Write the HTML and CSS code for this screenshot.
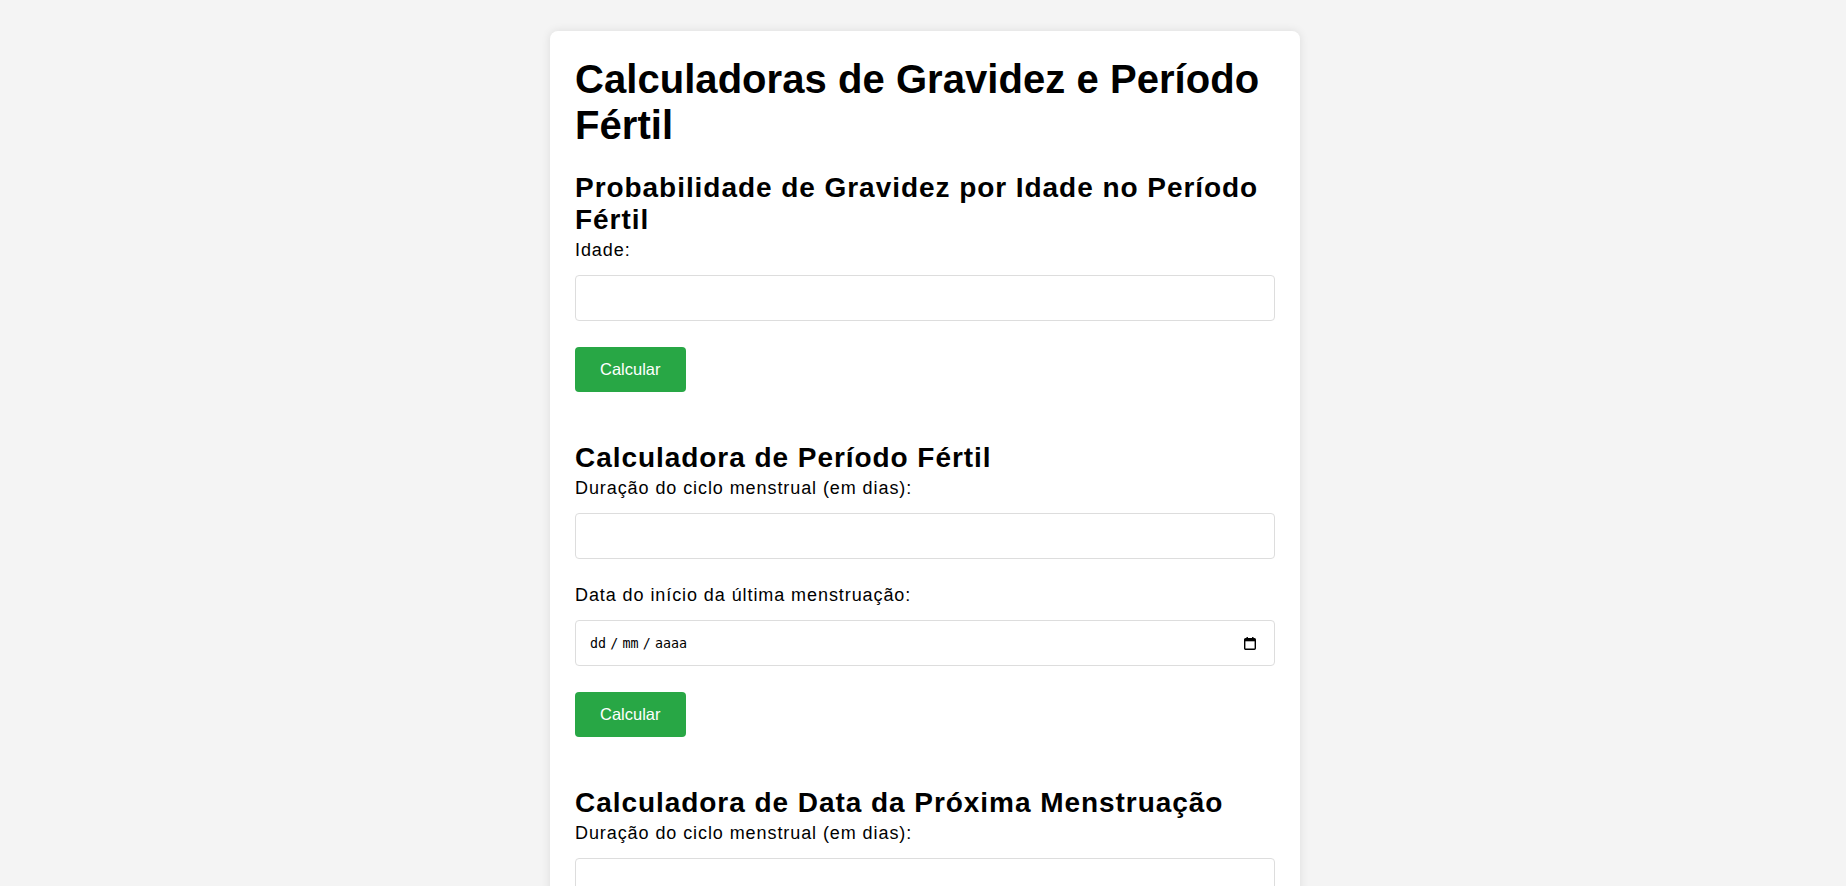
FILE: index.html
```html
<!DOCTYPE html>
<html lang="pt-BR">
<head>
<meta charset="utf-8">
<title>Calculadoras de Gravidez e Período Fértil</title>
<link rel="stylesheet" href="styles.css">
</head>
<body>
<div class="container">
  <h1 class="title">Calculadoras de Gravidez e Período Fértil</h1>

  <section class="calc">
    <h2 class="calc-title">Probabilidade de Gravidez por Idade no Período Fértil</h2>
    <label class="field-label" for="idade">Idade:</label>
    <input class="field" id="idade" type="text">
    <button class="btn" type="button">Calcular</button>
  </section>

  <section class="calc">
    <h2 class="calc-title">Calculadora de Período Fértil</h2>
    <label class="field-label" for="ciclo1">Duração do ciclo menstrual (em dias):</label>
    <input class="field" id="ciclo1" type="text">
    <label class="field-label">Data do início da última menstruação:</label>
    <div class="field date-field">
      <span class="date-text"><span class="seg">dd</span><span class="sep">/</span><span class="seg">mm</span><span class="sep">/</span><span class="seg">aaaa</span></span>
      <svg class="cal-icon" width="12" height="13" viewBox="0 0 12 13" aria-hidden="true">
        <rect x="2.5" y="0" width="1.4" height="2.5" fill="#000"/>
        <rect x="8.1" y="0" width="1.4" height="2.5" fill="#000"/>
        <rect x="0.7" y="1.7" width="10.6" height="10.6" rx="1" fill="none" stroke="#000" stroke-width="1.4"/>
        <rect x="0.7" y="1.7" width="10.6" height="2.6" fill="#000"/>
      </svg>
    </div>
    <button class="btn" type="button">Calcular</button>
  </section>

  <section class="calc">
    <h2 class="calc-title">Calculadora de Data da Próxima Menstruação</h2>
    <label class="field-label" for="ciclo2">Duração do ciclo menstrual (em dias):</label>
    <input class="field" id="ciclo2" type="text">
    <label class="field-label">Data do início da última menstruação:</label>
    <div class="field date-field">
      <span class="date-text"><span class="seg">dd</span><span class="sep">/</span><span class="seg">mm</span><span class="sep">/</span><span class="seg">aaaa</span></span>
      <svg class="cal-icon" width="12" height="13" viewBox="0 0 12 13" aria-hidden="true">
        <rect x="2.5" y="0" width="1.4" height="2.5" fill="#000"/>
        <rect x="8.1" y="0" width="1.4" height="2.5" fill="#000"/>
        <rect x="0.7" y="1.7" width="10.6" height="10.6" rx="1" fill="none" stroke="#000" stroke-width="1.4"/>
        <rect x="0.7" y="1.7" width="10.6" height="2.6" fill="#000"/>
      </svg>
    </div>
    <button class="btn" type="button">Calcular</button>
  </section>
</div>
</body>
</html>
```
FILE: styles.css
```css
html, body {
  margin: 0;
  padding: 0;
}

body {
  background: #f4f4f4;
  font-family: "Liberation Sans", Arial, sans-serif;
  color: #000;
  padding-left: 4px;
}

.container {
  box-sizing: border-box;
  width: 750px;
  margin: 31px auto 30px;
  padding: 25px;
  background: #fff;
  border-radius: 8px;
  box-shadow: 0 0 10px rgba(0, 0, 0, 0.1);
}

.title {
  margin: 0 0 24px;
  font-size: 40px;
  line-height: 46px;
  font-weight: bold;
  letter-spacing: 0.05px;
}

.calc {
  display: flex;
  flex-direction: column;
  align-items: flex-start;
  margin-bottom: 50px;
}

.calc-title {
  margin: 0 0 4px;
  font-size: 28px;
  line-height: 32px;
  font-weight: bold;
  letter-spacing: 0.95px;
}

.field-label {
  display: block;
  font-size: 18px;
  line-height: 21px;
  margin-bottom: 14px;
  letter-spacing: 0.92px;
}

.field {
  box-sizing: border-box;
  width: 100%;
  height: 46px;
  margin: 0 0 26px;
  padding: 0 12px;
  border: 1px solid #ddd;
  border-radius: 4px;
  background: #fff;
  font-family: "Liberation Sans", Arial, sans-serif;
  font-size: 16px;
}

.date-field {
  display: flex;
  align-items: center;
  justify-content: space-between;
  padding: 0 18px 0 13px;
}

.date-text {
  font-family: "DejaVu Sans Mono", "Liberation Mono", monospace;
  font-size: 13.33px;
  color: #000;
  display: flex;
}

.seg {
  padding: 0 1px;
}

.sep {
  padding: 0 3.2px;
}

.cal-icon {
  display: block;
}

.btn {
  box-sizing: border-box;
  height: 45px;
  padding: 0 25px;
  border: none;
  border-radius: 4px;
  background: #28a745;
  color: #fff;
  font-family: "Liberation Sans", Arial, sans-serif;
  font-size: 16.5px;
  cursor: pointer;
}
```
